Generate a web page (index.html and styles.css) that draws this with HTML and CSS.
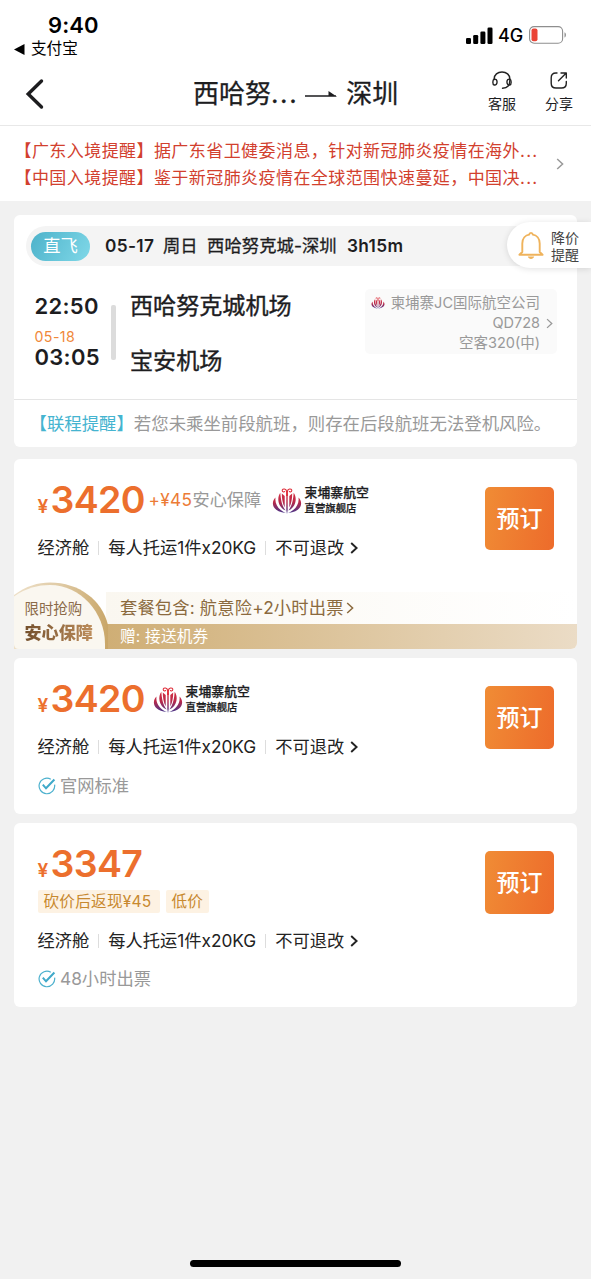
FILE: index.html
```html
<!DOCTYPE html>
<html lang="zh-CN">
<head>
<meta charset="utf-8">
<title>西哈努克城 - 深圳</title>
<link rel="stylesheet" href="styles.css">
</head>
<body>
<svg class="defs" width="0" height="0">
  <defs>
    <linearGradient id="lotusFill" x1="0" y1="0" x2="0" y2="26" gradientUnits="userSpaceOnUse">
      <stop offset="0" stop-color="#e0303c"/><stop offset=".55" stop-color="#b8294a"/><stop offset="1" stop-color="#3c3590"/>
    </linearGradient>
    <symbol id="lotus" viewBox="0 0 30 26">
      <g fill="url(#lotusFill)">
        <path d="M3.500 9.500C-1.500 14.500 0 23.500 13.800 25 7 22 2.500 16.500 3.500 9.500Z"/>
        <path d="M26.500 9.500C31.500 14.500 30 23.500 16.200 25 23 22 27.500 16.500 26.500 9.500Z"/>
        <path d="M8.300 4.800C4.800 9.500 5.500 19 13.600 22.600 9.600 17.500 8.800 11 8.300 4.800Z"/>
        <path d="M21.700 4.800C25.200 9.500 24.500 19 16.400 22.600 20.400 17.500 21.200 11 21.700 4.800Z"/>
        <path d="M9.800 5.500L12.700 8V19.500C10.700 15.500 9.800 11 9.800 5.500Z"/>
        <path d="M20.200 5.500L17.300 8V19.500C19.300 15.500 20.200 11 20.200 5.500Z"/>
        <path d="M14.300 6H15.700V22L15 26 14.300 22Z"/>
      </g>
      <path d="M14.600 8V4C14.600 .4 10.300 .2 10.200 2.600 10.200 4.300 12.500 4.300 12.600 3M15.400 8V4C15.400 .4 19.700 .2 19.800 2.600 19.800 4.300 17.500 4.300 17.400 3" fill="none" stroke="#df303c" stroke-width="1.100"/>
    </symbol>
    <symbol id="chev" viewBox="0 0 8 12"><path d="M1.200 1L6.600 6 1.200 11" fill="none" stroke="currentColor" stroke-width="var(--w,1.500)"/></symbol>
    <symbol id="check" viewBox="0 0 18 18">
      <path d="M12.800 2.200A7.800 7.800 0 1 0 16.600 7.700" fill="none" stroke="#4db1ce" stroke-width="1.200"/>
      <path d="M4.800 7.700L8 11.300 16.400 2.500" fill="none" stroke="#3fa9c9" stroke-width="2"/>
    </symbol>
  </defs>
</svg>

<header class="header">
  <div class="status">
    <div class="status-left">
      <div class="clock">9:40</div>
      <div class="return"><svg width="11" height="11" viewBox="0 0 11 11"><path d="M0 5.500L10.500 0V11Z"/></svg><span>支付宝</span></div>
    </div>
    <div class="status-right">
      <svg width="27" height="17" viewBox="0 0 27 17"><rect y="11" width="5" height="6" rx="1.300"/><rect x="7.200" y="8" width="5" height="9" rx="1.300"/><rect x="14.400" y="4.500" width="5" height="12.500" rx="1.300"/><rect x="21.500" y="0.500" width="5" height="16.500" rx="1.300"/></svg>
      <span>4G</span>
      <svg width="38" height="18" viewBox="0 0 38 18"><rect x=".6" y=".6" width="33" height="16.600" rx="4.500" fill="#fff" stroke="#8e8e8e" stroke-width="1.100"/><rect x="2.500" y="2.600" width="6" height="12.600" rx="2" fill="#ea4335"/><path d="M35.500 6.200C37.400 7 37.400 10.800 35.500 11.600Z" fill="#8e8e8e"/></svg>
    </div>
  </div>
  <nav class="nav">
    <svg class="back" width="20" height="32" viewBox="0 0 20 32"><path d="M16.500 3L3.200 16 16.500 29" fill="none" stroke="#1d1d1f" stroke-width="3.400" stroke-linecap="round"/></svg>
    <div class="route"><span>西哈努<i class="dots">...</i></span><svg width="33" height="8" viewBox="0 0 33 8"><path d="M0 5.300H31V6.800H0ZM23.500 1L32 6.800H23.500Z" fill="#1d1d1f"/></svg><span>深圳</span></div>
    <div class="actions">
      <div class="action"><svg width="20" height="19" viewBox="0 0 20 19" fill="none" stroke="#222" stroke-width="1.400" stroke-linecap="round"><path d="M2.200 8.500C1.500 -1.500 18.500 -1.500 17.800 8.500M17.800 8.200C18.200 14.500 15.500 17.200 10.500 17.300"/><path d="M2.200 8.200C6 7.200 6 14.800 2.200 14 .4 13.500 .4 9 2.200 8.200ZM17.800 8.200C14 7.200 14 14.800 17.800 14 19.600 13.500 19.600 9 17.800 8.200Z"/></svg><span>客服</span></div>
      <div class="action"><svg width="20" height="19" viewBox="0 0 20 19" fill="none" stroke="#222" stroke-width="1.400" stroke-linecap="round" stroke-linejoin="round"><path d="M8 2H7Q2.200 2 2.200 6.800V12.200Q2.200 17 7 17H12.500Q17.300 17 17.300 12.200V10.500M12 2H17.300V7M17 2.300L9.500 9.700"/></svg><span>分享</span></div>
    </div>
  </nav>
</header>

<section class="alerts">
  <div class="alert-lines"><div>【广东入境提醒】据广东省卫健委消息，针对新冠肺炎疫情在海外<i class="dots">...</i></div><div>【中国入境提醒】鉴于新冠肺炎疫情在全球范围快速蔓延，中国决<i class="dots">...</i></div></div>
  <svg width="8" height="12"><use href="#chev"/></svg>
</section>

<main class="content">
  <section class="card flight">
    <div class="leg"><span class="direct">直飞</span><b class="leg-date">05-17</b><span class="leg-day">周日</span><span class="leg-route">西哈努克城-深圳</span><b>3h15m</b></div>
    <div class="schedule">
      <div class="times"><div>22:50</div><small>05-18</small><div>03:05</div></div>
      <div class="bar"></div>
      <div class="airports"><div>西哈努克城机场</div><div>宝安机场</div></div>
      <div class="airline">
        <div class="airline-info"><div><svg width="14" height="12"><use href="#lotus"/></svg>柬埔寨JC国际航空公司</div><div>QD728</div><div>空客320(中)</div></div>
        <svg width="7" height="11"><use href="#chev"/></svg>
      </div>
    </div>
    <div class="reminder"><span>【联程提醒】</span>若您未乘坐前段航班，则存在后段航班无法登机风险。</div>
    <aside class="price-alert"><svg width="26" height="29" viewBox="0 0 26 29"><path d="M4.300 21V12.500C4.300 7.500 7.500 4.200 11.200 3.600 11.400 1.300 14.600 1.300 14.800 3.600 18.500 4.200 21.700 7.500 21.700 12.500V21L24.600 23.800H1.400Z" fill="none" stroke="#efb35c" stroke-width="1.900" stroke-linejoin="round"/><path d="M9.800 25.500C10.500 28.700 15.500 28.700 16.200 25.500Z" fill="#efb35c"/></svg><span>降价<br>提醒</span></aside>
  </section>

  <section class="card fare fare-package">
    <div class="fare-body">
      <div class="fare-main">
        <div class="price-row"><span class="price"><i>¥</i>3420</span><span class="extra"><em>+¥45</em>安心保障</span><span class="brand"><svg width="30" height="26"><use href="#lotus"/></svg><span><b>柬埔寨航空</b><small>直营旗舰店</small></span></span></div>
        <div class="terms"><span>经济舱</span><span>每人托运1件x20KG</span><span>不可退改</span><svg width="8" height="12"><use href="#chev"/></svg></div>
      </div>
      <button class="book">预订</button>
    </div>
    <div class="promo">
      <div class="promo-badge">
        <svg class="arc" width="94" height="67" viewBox="0 0 94 67">
          <defs><linearGradient id="ring"><stop offset="0" stop-color="#eee0c8"/><stop offset=".5" stop-color="#dfcaa4"/><stop offset="1" stop-color="#c9a668"/></linearGradient></defs>
          <path d="M0 13C12 4 24 .5 36 .5 65 .5 88 18 94 43V67H0Z" fill="url(#ring)"/>
          <path d="M0 14.500C12 6 24 3 36 3 66 3 91 30 91 62V67H5Q0 67 0 62Z" fill="#faf7f0"/>
        </svg>
        <div class="badge-text"><span>限时抢购</span><b>安心保障</b></div>
      </div>
      <div class="promo-lines"><div>套餐包含: 航意险+2小时出票<svg width="8" height="12"><use href="#chev"/></svg></div><div>赠: 接送机券</div></div>
    </div>
  </section>

  <section class="card fare fare-standard">
    <div class="fare-body">
      <div class="fare-main">
        <div class="price-row"><span class="price"><i>¥</i>3420</span><span class="brand"><svg width="30" height="26"><use href="#lotus"/></svg><span><b>柬埔寨航空</b><small>直营旗舰店</small></span></span></div>
        <div class="terms"><span>经济舱</span><span>每人托运1件x20KG</span><span>不可退改</span><svg width="8" height="12"><use href="#chev"/></svg></div>
        <div class="note"><svg width="18" height="18"><use href="#check"/></svg>官网标准</div>
      </div>
      <button class="book">预订</button>
    </div>
  </section>

  <section class="card fare fare-low">
    <div class="fare-body">
      <div class="fare-main">
        <div class="price-row"><span class="price"><i>¥</i>3347</span></div>
        <div class="tags"><span>砍价后返现¥45</span><span>低价</span></div>
        <div class="terms"><span>经济舱</span><span>每人托运1件x20KG</span><span>不可退改</span><svg width="8" height="12"><use href="#chev"/></svg></div>
        <div class="note"><svg width="18" height="18"><use href="#check"/></svg>48小时出票</div>
      </div>
      <button class="book">预订</button>
    </div>
  </section>
</main>
<div class="home"></div>
</body>
</html>
```
FILE: styles.css
```css
* { box-sizing: border-box; }
body {
  margin: 0;
  height: 1279px;
  display: flex;
  flex-direction: column;
  background: #f1f1f1;
  color: #1d1d1f;
  font: 17px/1 Inter, "Noto Sans CJK SC", sans-serif;
  white-space: nowrap;
  overflow: hidden;
}
svg { display: block; flex: none; }
.defs { position: absolute; }
i, em { font-style: normal; }

.header { height: 126px; background: #fff; border-bottom: 1px solid #e8e8e8; }
.status { height: 62px; display: flex; justify-content: space-between; color: #000; }
.status-left { padding: 13px 0 0 14px; }
.clock { font-size: 22px; font-weight: 600; line-height: 24px; padding-left: 34px; letter-spacing: .1px; }
.return { display: flex; align-items: center; gap: 6px; height: 24px; font-size: 15.600px; }
.status-right { display: flex; align-items: center; height: 18px; margin: 26px 24px 0 0; }
.status-right span { font-size: 18px; font-weight: 500; width: 25px; margin: 2px 6px 0 5px; }
.nav { height: 63px; display: flex; }
.back { margin: 16px 0 0 25px; }
.route { display: flex; align-items: center; height: 63px; margin-left: 148px; font-size: 26px; -webkit-text-stroke: .3px; }
.route .dots { letter-spacing: 1.600px; }
.route svg { margin: 0 8px 0 7px; }
.actions { display: flex; gap: 29px; margin: 9px 18px 0 auto; }
.action { display: flex; flex-direction: column; align-items: center; gap: 7px; font-size: 14px; width: 28px; }

.alerts { height: 75px; display: flex; align-items: center; padding-left: 14.500px; background: #fff; color: #d2402e; }
.alert-lines { width: 541px; font-size: 17px; letter-spacing: .43px; line-height: 27px; padding-top: 2px; }
.alerts .dots { letter-spacing: 1.300px; }
.alerts svg { color: #999; }

.content { flex: 1; padding: 14px 14px 0; display: flex; flex-direction: column; }
.card { background: #fff; border-radius: 6px; flex: none; }
.flight { position: relative; height: 232px; padding-top: 11px; margin-bottom: 12px; }
.leg { display: flex; align-items: center; height: 40px; margin-left: 12px; padding-left: 5px; border-radius: 20px 0 0 20px; background: #f4f4f4; font-size: 17.300px; }
.leg b { font-weight: 600; letter-spacing: .35px; }
.leg > span:not(.direct) { -webkit-text-stroke: .3px; }
.direct { width: 59px; height: 29px; border-radius: 15px; background: linear-gradient(120deg, #4db2ca, #80d8e8); color: #fff; text-align: center; line-height: 28px; }
.leg-date { width: 58px; margin-left: 15px; }
.leg-day { width: 44px; }
.leg-route { width: 140px; letter-spacing: .1px; }
.schedule { display: flex; height: 133px; padding-left: 20.500px; }
.times { width: 76.500px; padding-top: 28px; font-size: 22px; font-weight: 600; line-height: 24px; letter-spacing: .3px; }
.times small { display: block; font-size: 14.200px; font-weight: 400; line-height: 14px; margin: 12px 0 1px; color: #f0883a; letter-spacing: .4px; }
.bar { width: 5px; height: 55px; margin-top: 39px; background: #dcdcdc; border-radius: 2px; }
.airports { margin: 25px 0 0 14px; font-size: 23.100px; line-height: 30px; -webkit-text-stroke: .4px; }
.airports div + div { margin-top: 25px; }
.airline { display: flex; align-items: center; gap: 6px; height: 65px; margin: 23px 20px 0 auto; padding: 3px 4px 0 6px; background: #fafafa; border-radius: 5px; color: #999; }
.airline-info { font-size: 14.500px; line-height: 20.200px; text-align: right; }
.airline-info div:first-child { display: flex; align-items: center; gap: 6px; }
.reminder { height: 48px; border-top: 1px solid #e5e5e5; padding-left: 15.500px; line-height: 47px; font-size: 17.400px; color: #999; }
.reminder span { color: #45b4d0; }
.price-alert { position: absolute; left: 493px; top: 7px; width: 84px; height: 46px; display: flex; align-items: center; gap: 7px; padding-left: 11px; border-radius: 23px 0 0 23px; background: #fff; box-shadow: 0 1px 6px rgba(0,0,0,.12); font-size: 14px; line-height: 17px; color: #444; }
.price-alert span { padding-top: 2px; }

.fare-body { display: flex; justify-content: space-between; padding: 22px 23px 0 23.500px; }
.price-row { display: flex; height: 37px; align-items: center; }
.price { width: 107px; font-size: 37.500px; font-weight: 600; letter-spacing: -.65px; color: #ec6f2d; display: flex; align-items: baseline; padding-top: 1px; }
.price i { font-size: 19px; width: 13px; flex: none; }
.extra { width: 117px; margin-left: 4px; font-size: 17.200px; color: #999; padding-top: 1px; }
.extra em { color: #ec7b36; letter-spacing: .4px; }
.brand { display: flex; align-items: center; gap: 3px; margin: 2px 0 0 6px; }
.price + .brand { margin-left: 8px; }
.brand b, .brand small { display: block; font-size: 12.900px; line-height: 16px; font-weight: 500; -webkit-text-stroke: .25px; }
.brand small { font-size: 10.400px; line-height: 15px; }
.terms { display: flex; align-items: center; margin-top: 20px; height: 20px; font-size: 17.250px; color: #222; }
.terms span + span { margin-left: 9px; padding-left: 10px; background: linear-gradient(#ddd, #ddd) 0 50% / 1px 14px no-repeat; }
.terms svg { margin-left: 6px; --w: 1.900; }
.book { width: 69px; height: 63px; margin-top: 6px; border: 0; border-radius: 5px; background: linear-gradient(100deg, #f08c35, #ed6b2b); color: #fff; font: 500 23px/1 Inter, "Noto Sans CJK SC", sans-serif; padding: 2px 0 0; }
.fare-package { height: 190px; margin-bottom: 9px; }
.promo { display: flex; height: 67px; margin-top: 24px; }
.promo-badge { position: relative; width: 92px; }
.arc { position: absolute; top: 0; left: 0; }
.badge-text { position: relative; padding: 17px 0 0 10.500px; }
.badge-text span { display: block; font-size: 14.400px; line-height: 20px; color: #8b6a48; }
.badge-text b { display: inline-block; margin-top: 2px; font-size: 17.100px; line-height: 24px; font-weight: 900; background: linear-gradient(90deg, #75502c, #bd8e5d); -webkit-background-clip: text; color: transparent; }
.promo-lines { flex: 1; padding-top: 10px; color: #8b6a3e; }
.promo-lines div { height: 32px; display: flex; align-items: center; padding-left: 14px; font-size: 17.300px; letter-spacing: .15px; background: linear-gradient(90deg, #faf7f0, #fff); }
.promo-lines svg { margin-left: 2px; }
.promo-lines div + div { height: 25px; font-size: 15.700px; color: #fff; background: linear-gradient(90deg, #cfae75, #ebdcc6); border-radius: 0 0 6px; }
.fare-standard { height: 156px; margin-bottom: 9px; }
.note { display: flex; align-items: center; gap: 4.500px; height: 18px; margin-top: 20px; font-size: 17.300px; color: #999; }
.tags { display: flex; gap: 6px; margin-top: 8px; }
.tags span { height: 23px; padding: 0 6px; border-radius: 2px; background: #fdf2e3; color: #c8892f; font-size: 15.600px; letter-spacing: .25px; line-height: 23px; }
.tags span:first-child { width: 122px; }
.fare-low { height: 184px; }
.fare-low .terms { margin-top: 18px; }
.fare-low .note { margin-top: 19px; }
.home { width: 211px; height: 7px; margin: 0 auto 12px; border-radius: 4px; background: #000; }
```
